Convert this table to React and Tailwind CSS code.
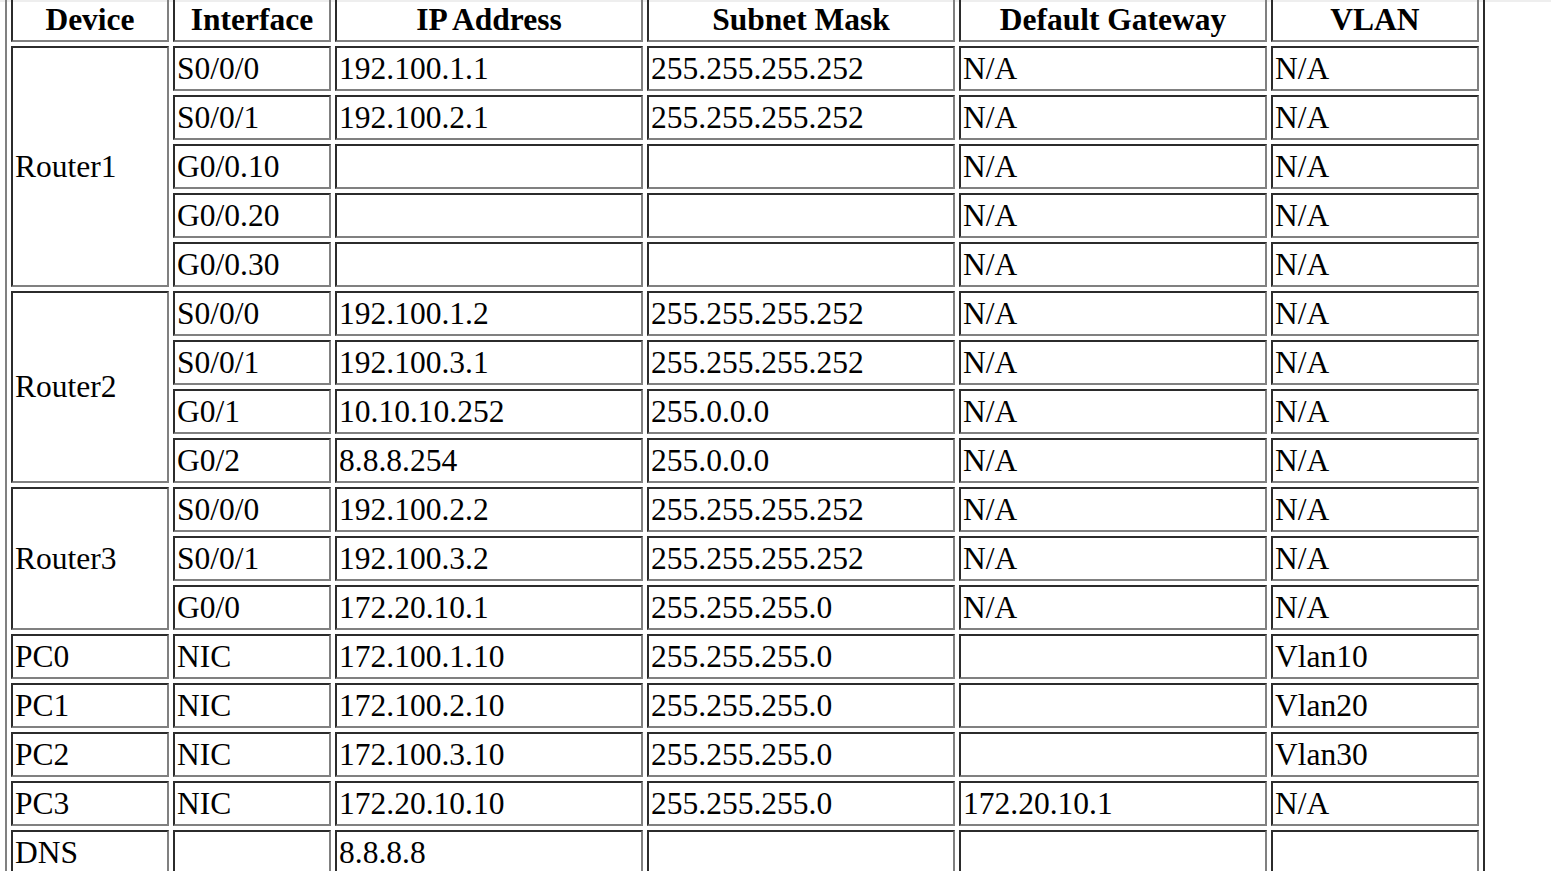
const rows = [
  { device: 'Router1', span: 5, iface: 'S0/0/0', ip: '192.100.1.1', mask: '255.255.255.252', gw: 'N/A', vlan: 'N/A' },
  { iface: 'S0/0/1', ip: '192.100.2.1', mask: '255.255.255.252', gw: 'N/A', vlan: 'N/A' },
  { iface: 'G0/0.10', ip: '', mask: '', gw: 'N/A', vlan: 'N/A' },
  { iface: 'G0/0.20', ip: '', mask: '', gw: 'N/A', vlan: 'N/A' },
  { iface: 'G0/0.30', ip: '', mask: '', gw: 'N/A', vlan: 'N/A' },
  { device: 'Router2', span: 4, iface: 'S0/0/0', ip: '192.100.1.2', mask: '255.255.255.252', gw: 'N/A', vlan: 'N/A' },
  { iface: 'S0/0/1', ip: '192.100.3.1', mask: '255.255.255.252', gw: 'N/A', vlan: 'N/A' },
  { iface: 'G0/1', ip: '10.10.10.252', mask: '255.0.0.0', gw: 'N/A', vlan: 'N/A' },
  { iface: 'G0/2', ip: '8.8.8.254', mask: '255.0.0.0', gw: 'N/A', vlan: 'N/A' },
  { device: 'Router3', span: 3, iface: 'S0/0/0', ip: '192.100.2.2', mask: '255.255.255.252', gw: 'N/A', vlan: 'N/A' },
  { iface: 'S0/0/1', ip: '192.100.3.2', mask: '255.255.255.252', gw: 'N/A', vlan: 'N/A' },
  { iface: 'G0/0', ip: '172.20.10.1', mask: '255.255.255.0', gw: 'N/A', vlan: 'N/A' },
  { device: 'PC0', span: 1, iface: 'NIC', ip: '172.100.1.10', mask: '255.255.255.0', gw: '', vlan: 'Vlan10' },
  { device: 'PC1', span: 1, iface: 'NIC', ip: '172.100.2.10', mask: '255.255.255.0', gw: '', vlan: 'Vlan20' },
  { device: 'PC2', span: 1, iface: 'NIC', ip: '172.100.3.10', mask: '255.255.255.0', gw: '', vlan: 'Vlan30' },
  { device: 'PC3', span: 1, iface: 'NIC', ip: '172.20.10.10', mask: '255.255.255.0', gw: '172.20.10.1', vlan: 'N/A' },
  { device: 'DNS', span: 1, iface: '', ip: '8.8.8.8', mask: '', gw: '', vlan: '' },
];

// inset cell border like border="1"
const cell =
  'h-[45px] border-2 border-t-[#2b2b2b] border-l-[#2b2b2b] border-b-[#808080] border-r-[#808080] px-[2px] py-0 text-left align-middle font-normal';
const head =
  'h-[45px] border-2 border-t-[#2b2b2b] border-l-[#2b2b2b] border-b-[#808080] border-r-[#808080] px-[2px] py-0 text-center align-middle font-bold';

export default function App() {
  return (
    <div className="relative min-h-screen bg-white overflow-hidden">
      {/* thin top band */}
      <div className="absolute left-0 right-0 top-0 h-[2px] bg-[#eeeeee]" />

      <table
        className="relative ml-[5px] mt-[-9px] w-[1480px] table-fixed border-separate border-spacing-[4px] border-2 border-t-[#808080] border-l-[#808080] border-b-[#2b2b2b] border-r-[#2b2b2b] text-black text-[31.5px] leading-[36px]"
        style={{ fontFamily: '"Liberation Serif", "Times New Roman", serif' }}
      >
        <thead>
          <tr>
            <th className={`${head} w-[158px]`}>Device</th>
            <th className={`${head} w-[158px]`}>Interface</th>
            <th className={`${head} w-[308px]`}>IP Address</th>
            <th className={`${head} w-[308px]`}>Subnet Mask</th>
            <th className={`${head} w-[308px]`}>Default Gateway</th>
            <th className={`${head} w-[208px]`}>VLAN</th>
          </tr>
        </thead>
        <tbody>
          {rows.map((r, i) => (
            <tr key={i}>
              {r.device && (
                <td className={cell} rowSpan={r.span}>
                  {r.device}
                </td>
              )}
              <td className={cell}>{r.iface}</td>
              <td className={cell}>{r.ip}</td>
              <td className={cell}>{r.mask}</td>
              <td className={cell}>{r.gw}</td>
              <td className={cell}>{r.vlan}</td>
            </tr>
          ))}
        </tbody>
      </table>
    </div>
  );
}
